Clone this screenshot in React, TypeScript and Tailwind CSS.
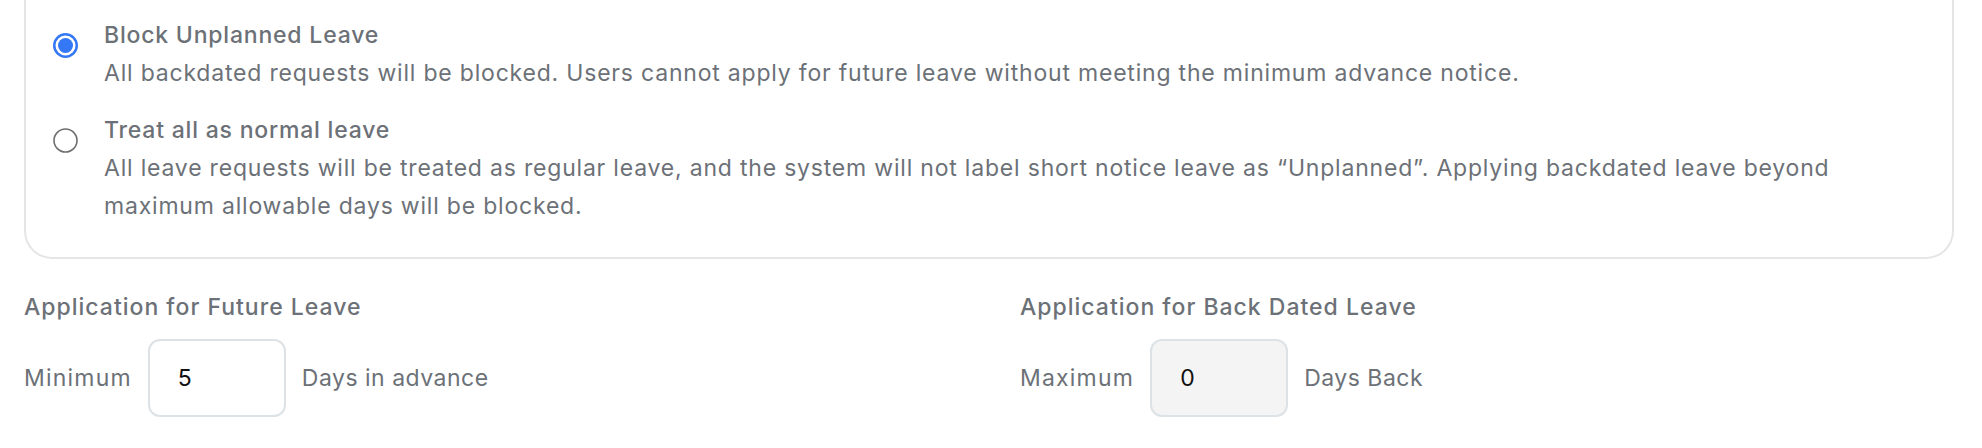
import React from 'react';

interface LeaveOption {
  title: string;
  description: string;
  selected: boolean;
}

const options: LeaveOption[] = [
  {
    title: 'Block Unplanned Leave',
    description:
      'All backdated requests will be blocked. Users cannot apply for future leave without meeting the minimum advance notice.',
    selected: true,
  },
  {
    title: 'Treat all as normal leave',
    description:
      'All leave requests will be treated as regular leave, and the system will not label short notice leave as \u201cUnplanned\u201d. Applying backdated leave beyond maximum allowable days will be blocked.',
    selected: false,
  },
];

function Radio({ checked }: { checked: boolean }) {
  return (
    <svg width="25" height="25" viewBox="0 0 25 25" className="shrink-0 mt-[17px]">
      {checked ? (
        <>
          <circle cx="12.5" cy="12.5" r="11.25" fill="none" stroke="#3478f6" strokeWidth="2.5" />
          <circle cx="12.5" cy="12.5" r="7.5" fill="#3478f6" />
        </>
      ) : (
        <circle cx="12.5" cy="12.5" r="11.5" fill="none" stroke="#6e6e6e" strokeWidth="1.6" />
      )}
    </svg>
  );
}

function DaysField({
  label,
  value,
  suffix,
  disabled,
}: {
  label: string;
  value: string;
  suffix: string;
  disabled?: boolean;
}) {
  return (
    <div className="flex items-center gap-4 mt-[13px]">
      <span className="text-[23px] leading-[38px] tracking-[1.2px] text-[#6c7177]">{label}</span>
      <div
        className={
          'w-[138px] h-[78px] rounded-[12px] border-2 border-[#dce2e5] flex items-center pl-[28px] text-[23px] text-[#111111] ' +
          (disabled ? 'bg-[#f4f4f4]' : 'bg-white')
        }
      >
        {value}
      </div>
      <span className="text-[23px] leading-[38px] tracking-[0.5px] text-[#6c7177]">{suffix}</span>
    </div>
  );
}

export default function App() {
  return (
    <div
      className="w-[1982px] h-[448px] bg-white pl-6 pr-7 overflow-hidden tracking-[0.8px]"
      style={{ fontFamily: 'Inter, "Noto Sans", sans-serif' }}
    >
      {/* Option card, its top edge is cut off */}
      <div className="border-x-2 border-b-2 border-[#e5e5e5] rounded-b-[28px] pt-[16px] pb-[32px] pl-[27px] pr-[27px]">
        <div className="flex flex-col gap-[19px]">
          {options.map((opt) => (
            <div key={opt.title} className="flex items-start gap-[26px]">
              <Radio checked={opt.selected} />
              <div className="min-w-0 flex-1">
                <div className="text-[23px] leading-[38px] font-medium text-[#6c7177]">{opt.title}</div>
                <div className="text-[23px] leading-[38px] text-[#6c7177]">{opt.description}</div>
              </div>
            </div>
          ))}
        </div>
      </div>

      <div className="grid grid-cols-[996px_1fr] mt-[29px]">
        <div>
          <div className="text-[23px] leading-[38px] font-medium tracking-[1px] text-[#6c7177]">
            Application for Future Leave
          </div>
          <DaysField label="Minimum" value="5" suffix="Days in advance" />
        </div>
        <div>
          <div className="text-[23px] leading-[38px] font-medium tracking-[1px] text-[#6c7177]">
            Application for Back Dated Leave
          </div>
          <DaysField label="Maximum" value="0" suffix="Days Back" disabled />
        </div>
      </div>
    </div>
  );
}
